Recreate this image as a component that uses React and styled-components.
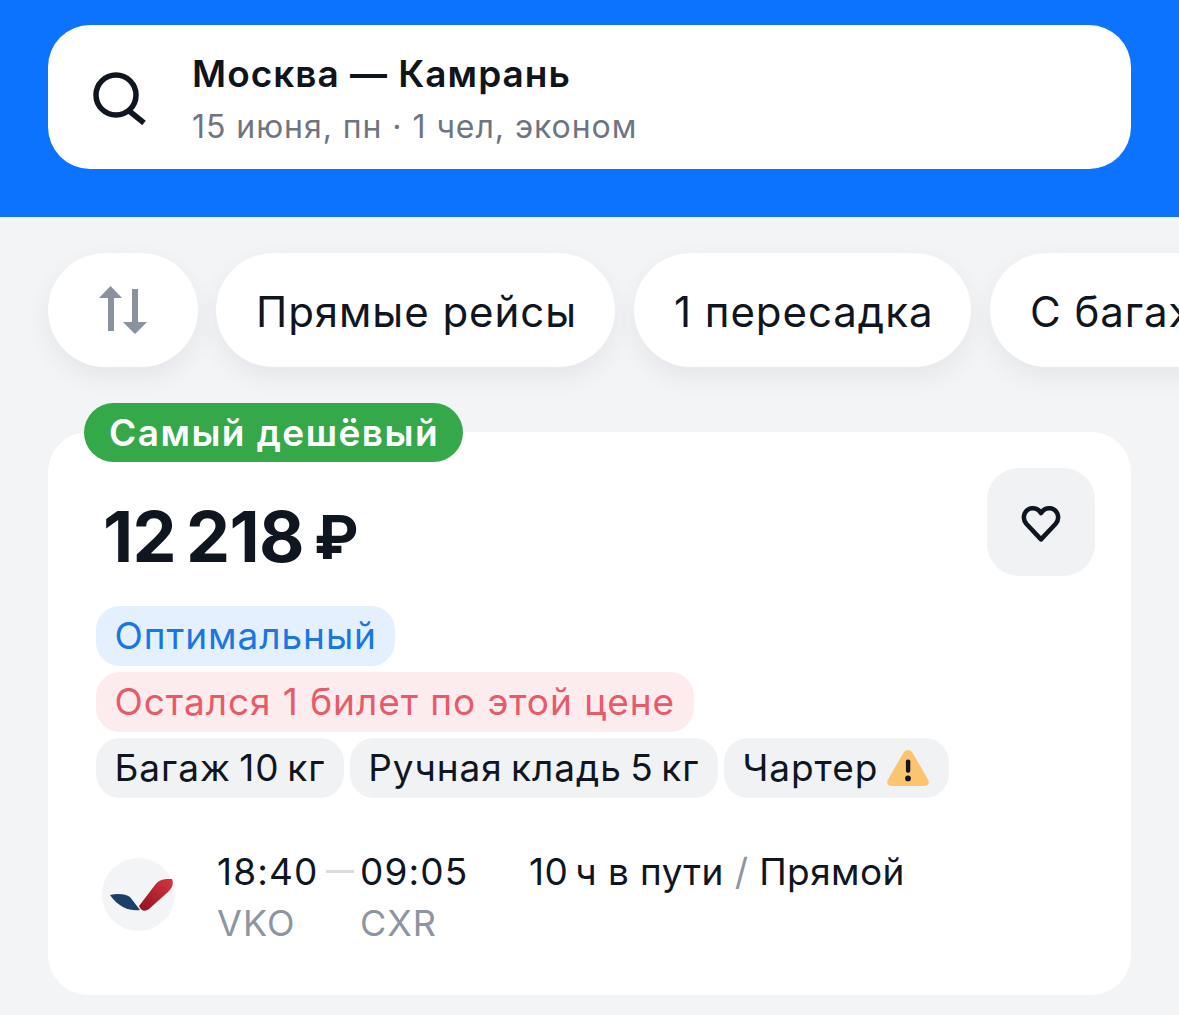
import React from "react";
import styled, { createGlobalStyle } from "styled-components";

const Global = createGlobalStyle`
  html, body { margin: 0; padding: 0; background: #f3f4f6; }
  body { font-family: Inter, "Noto Sans", "Liberation Sans", sans-serif; color: #10161f; }
`;

const Page = styled.div`
  width: 1179px;
  height: 1015px;
  overflow: hidden;
  background: #f3f4f6;
`;

const Header = styled.header`
  height: 217px;
  box-sizing: border-box;
  padding: 25px 48px 0;
  background: #0c73fe;
`;

const SearchBox = styled.div`
  height: 144px;
  border-radius: 42px;
  background: #fff;
  display: flex;
  align-items: center;
  padding-left: 45px;
`;

const SearchText = styled.div`
  margin-left: 43px;
  display: flex;
  flex-direction: column;
  gap: 10px;
  margin-top: 4px;
`;

const Route = styled.div`
  font-size: 37px;
  line-height: 46px;
  font-weight: 600;
  letter-spacing: 1px;
  color: #10141b;
`;

const Details = styled.div`
  font-size: 32px;
  line-height: 40px;
  color: #6e7580;
  letter-spacing: 0.95px;
`;

const Chips = styled.div`
  display: flex;
  gap: 19px;
  padding: 36px 0 0 48px;
  height: 114px;
`;

const Chip = styled.div`
  flex: none;
  height: 114px;
  width: ${(p) => p.$w}px;
  margin-right: ${(p) => (p.$center ? -1 : 0)}px;
  box-sizing: border-box;
  border-radius: 57px;
  background: #fff;
  box-shadow: 0 10px 24px rgba(40, 50, 70, 0.07);
  display: flex;
  align-items: center;
  justify-content: ${(p) => (p.$center ? "center" : "flex-start")};
  padding-left: ${(p) => (p.$center ? 0 : 40)}px;
  padding-top: ${(p) => (p.$center ? 0 : 2)}px;
  font-size: 42px;
  color: #10161f;
  white-space: nowrap;
  letter-spacing: 0.95px;
`;

const Card = styled.section`
  position: relative;
  margin: 65px 48px 0;
  height: 563px;
  box-sizing: border-box;
  padding: 63px 36px 0 48px;
  border-radius: 40px;
  background: #fff;
`;

const Badge = styled.div`
  position: absolute;
  left: 36px;
  top: -29px;
  height: 59px;
  padding: 0 24px 0 25px;
  border-radius: 30px;
  background: #35a84a;
  color: #fff;
  font-size: 37px;
  font-weight: 600;
  line-height: 59px;
  letter-spacing: 1.45px;
`;

const FavButton = styled.button`
  position: absolute;
  right: 36px;
  top: 36px;
  width: 108px;
  height: 108px;
  border: 0;
  padding: 4px 0 0;
  border-radius: 32px;
  background: #f0f2f4;
  display: flex;
  align-items: center;
  justify-content: center;
`;

const Price = styled.div`
  margin-left: 7px;
  font-size: 70px;
  line-height: 84px;
  font-weight: 700;
  letter-spacing: -0.6px;
  word-spacing: -6px;
  color: #10161f;
  display: flex;
  align-items: center;
`;

const Rub = styled.span`
  margin-left: 10px;
  font-size: 60px;
  font-weight: 700;
  letter-spacing: 0;
`;

const Tags = styled.div`
  margin-top: 27px;
  display: flex;
  flex-direction: column;
  gap: 6px;
  align-items: flex-start;
`;

const TagRow = styled.div`
  display: flex;
  gap: 6px;
`;

const palette = {
  blue: ["#e4f0fd", "#1a76e4"],
  red: ["#fdecee", "#e85a68"],
  gray: ["#f0f2f4", "#10161f"],
};

const Tag = styled.div`
  height: 60px;
  box-sizing: border-box;
  padding: 0 18.5px;
  border-radius: 24px;
  background: ${(p) => palette[p.$tone][0]};
  color: ${(p) => palette[p.$tone][1]};
  font-size: 37px;
  line-height: 60px;
  letter-spacing: 0.95px;
  word-spacing: ${(p) => (p.$tight ? -3 : 0)}px;
  white-space: nowrap;
  display: flex;
  align-items: center;
  gap: 8px;
`;

const Flight = styled.div`
  margin-top: 50px;
  margin-left: 6px;
  display: flex;
  align-items: flex-start;
`;

const LogoCircle = styled.div`
  flex: none;
  width: 73px;
  height: 73px;
  margin-top: 10px;
  border-radius: 50%;
  background: #f3f4f6;
  display: flex;
  align-items: center;
  justify-content: center;
`;

const TimeColumn = styled.div`
  width: 101px;
  margin-left: ${(p) => p.$ml || 0}px;
`;

const Time = styled.div`
  font-size: 37px;
  line-height: 48px;
  letter-spacing: 1.1px;
  color: #10161f;
  white-space: nowrap;
`;

const Code = styled.div`
  font-size: 36px;
  line-height: 48px;
  margin-top: 3px;
  color: #8d95a1;
  letter-spacing: 1.1px;
`;

const Dash = styled.div`
  flex: none;
  width: 28px;
  height: 3px;
  margin: 22px 6px 0 8px;
  background: #d9dcdf;
`;

const Duration = styled.div`
  margin-left: 68px;
  font-size: 37px;
  line-height: 48px;
  letter-spacing: 0.4px;
  white-space: nowrap;
  color: #10161f;
`;

const Slash = styled.span`
  color: #8d95a1;
`;

const SearchIcon = () => (
  <svg width="56" height="56" viewBox="0 0 56 56" fill="none" stroke="#10161f" strokeWidth="5.5">
    <circle cx="23" cy="26" r="20" />
    <path d="M35 41 L51 54" />
  </svg>
);

const SortIcon = () => (
  <svg width="48" height="48" viewBox="0 0 48 48" fill="#8a929e">
    <path d="M11.5 0 L23 12 H15 V45 H9 V12 H0 Z" />
    <path d="M33 3 H39 V36 H48 L36 48 L24 36 H33 Z" />
  </svg>
);

const HeartIcon = () => (
  <svg width="40" height="38" viewBox="0 0 44 42" fill="none" stroke="#10161f" strokeWidth="5" strokeLinejoin="round">
    <path d="M22 38 L6 21 C0 14 4 4 12.5 3.5 C16.5 3.3 20 5.5 22 9 C24 5.5 27.5 3.3 31.5 3.5 C40 4 44 14 38 21 Z" />
  </svg>
);

const WarnIcon = () => (
  <svg width="44" height="40" viewBox="0 0 46 42">
    <path d="M23 2 C25 2 26.5 3 28 5.5 L44 33 C46 37 44 40 40 40 H6 C2 40 0 37 2 33 L18 5.5 C19.5 3 21 2 23 2 Z" fill="#fbc56f" />
    <rect x="20.8" y="12" width="4.6" height="14" rx="2" fill="#10161f" />
    <circle cx="23" cy="32" r="3" fill="#10161f" />
  </svg>
);

const AirlineLogo = () => (
  <svg width="73" height="73" viewBox="0 0 73 73">
    <defs>
      <linearGradient id="wing" x1="0" y1="1" x2="1" y2="0">
        <stop offset="0" stopColor="#8f1420" />
        <stop offset="1" stopColor="#d7343f" />
      </linearGradient>
    </defs>
    <path d="M8 37 C16 35 24 36 28 39 L38 52 C28 53 17 50 8 37 Z" fill="#1c3f68" />
    <path d="M37 48 L53 27 C56 23 60 21 66 21 H70 C72 26 70 30 66 34 L47 51 C43 54 39 53 37 48 Z" fill="url(#wing)" />
  </svg>
);

export default function App() {
  return (
    <Page>
      <Global />
      <Header>
        <SearchBox>
          <SearchIcon />
          <SearchText>
            <Route>Москва — Камрань</Route>
            <Details>15 июня, пн · 1 чел, эконом</Details>
          </SearchText>
        </SearchBox>
      </Header>
      <Chips>
        <Chip $w={150} $center><SortIcon /></Chip>
        <Chip $w={399}>Прямые рейсы</Chip>
        <Chip $w={337}>1 пересадка</Chip>
        <Chip $w={300}>С багажом</Chip>
      </Chips>
      <Card>
        <Badge>Самый дешёвый</Badge>
        <FavButton aria-label="В избранное"><HeartIcon /></FavButton>
        <Price>12 218<Rub>₽</Rub></Price>
        <Tags>
          <Tag $tone="blue">Оптимальный</Tag>
          <Tag $tone="red">Остался 1 билет по этой цене</Tag>
          <TagRow>
            <Tag $tone="gray" $tight>Багаж 10{"\u2009"}кг</Tag>
            <Tag $tone="gray" $tight>Ручная кладь 5{"\u2009"}кг</Tag>
            <Tag $tone="gray">Чартер <WarnIcon /></Tag>
          </TagRow>
        </Tags>
        <Flight>
          <LogoCircle><AirlineLogo /></LogoCircle>
          <TimeColumn $ml={42}>
            <Time>18:40</Time>
            <Code>VKO</Code>
          </TimeColumn>
          <Dash />
          <TimeColumn>
            <Time>09:05</Time>
            <Code>CXR</Code>
          </TimeColumn>
          <Duration>10{"\u2009"}ч в пути <Slash>/</Slash> Прямой</Duration>
        </Flight>
      </Card>
    </Page>
  );
}
